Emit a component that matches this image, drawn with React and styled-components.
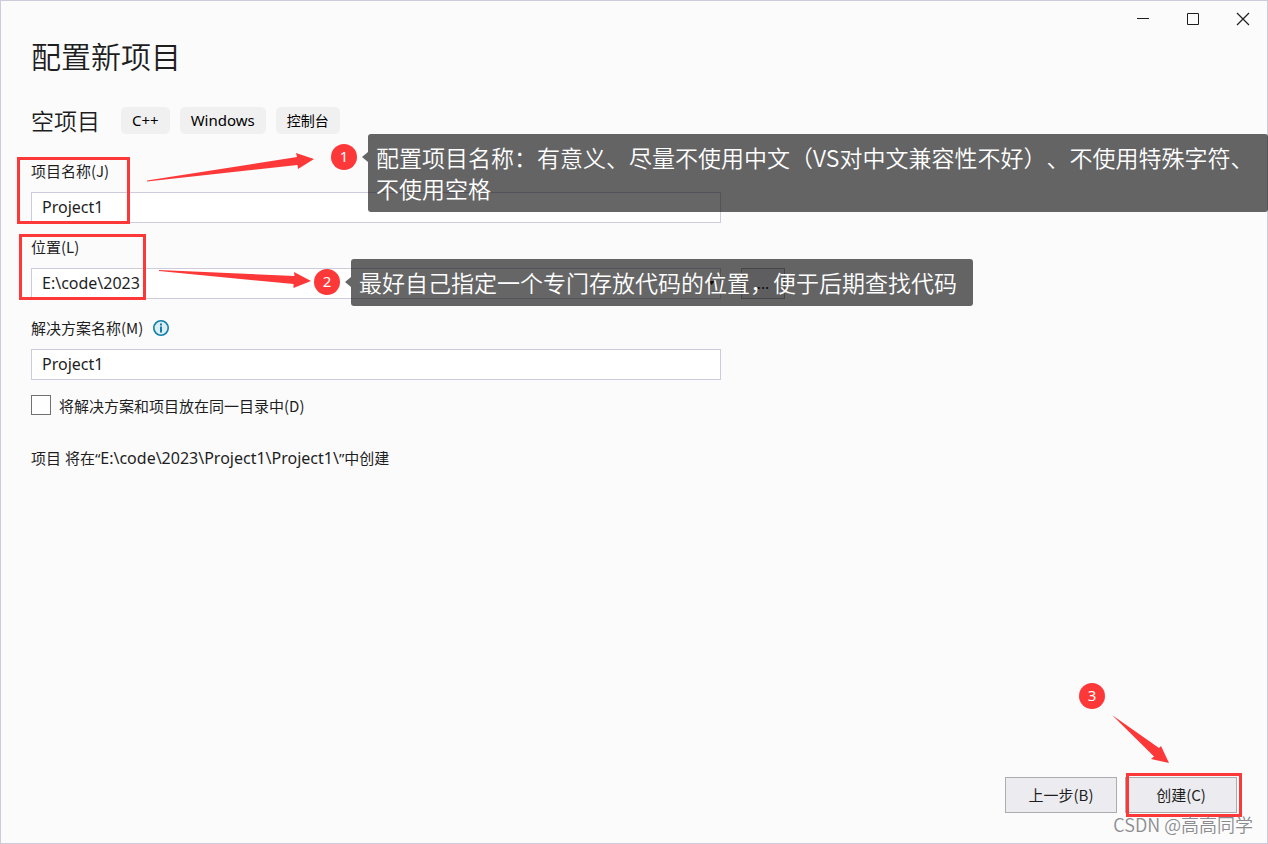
import React, { useCallback, useState } from 'react';
import styled, { createGlobalStyle } from 'styled-components';


const GlobalStyle = createGlobalStyle`
    * { box-sizing: border-box; }

    html, body, #root {
        height: 100%;
        margin: 0;
    }

    body, button, input, select {
        font-family: 'Noto Sans', 'Noto Sans CJK SC', sans-serif;
        font-size: 15px;
        color: #1e1e1e;
    }
`;

const Window = styled.div`
    position: relative;
    display: flex;
    flex-direction: column;
    min-height: 100%;
    overflow: hidden;
    background-color: #fbfbfc;
    outline: 1px solid #ccccdc;
    outline-offset: -1px;
`;

const TitleBar = styled.div`
    display: flex;
    justify-content: flex-end;
    height: 38px;
`;

const WindowButton = styled.button`
    display: flex;
    align-items: center;
    justify-content: center;
    width: 50px;
    padding: 0;
    border: 0;
    background: none;
`;

const Content = styled.main`
    flex: 1;
    padding: 0 31px;
`;

const Title = styled.h1`
    margin: 0;
    font-family: 'Noto Sans CJK SC', sans-serif;
    font-size: 30px;
    font-weight: 350;
    line-height: 34px;
`;

const Template = styled.div`
    display: flex;
    align-items: center;
    gap: 10px;
    margin: 35px 0 26px;

    h2 {
        margin: 0 11px 0 0;
        font-family: 'Noto Sans CJK SC', sans-serif;
        font-size: 23px;
        font-weight: 350;
        line-height: 27px;
    }
`;

const Tag = styled.span`
    padding: 0 11px;
    border-radius: 5px;
    background-color: #f0f0f0;
    font-size: ${({ $size }) => $size || 15}px;
    line-height: 27px;
    color: #000000;
`;

const Field = styled.div`
    position: relative;
    margin-bottom: ${({ $gap }) => $gap}px;
`;

const Label = styled.label`
    display: flex;
    align-items: center;
    gap: 10px;
    margin-bottom: 10px;
    font-family: 'Noto Sans CJK SC', sans-serif;
    line-height: 22px;
`;

const Line = styled.div`
    display: flex;
    gap: 20px;
`;

const TextInput = styled.input`
    width: 100%;
    max-width: 690px;
    height: 31px;
    padding: 0 10px 2px;
    border: 1px solid #ccccdc;
    background-color: #ffffff;
    font-size: 16px;
`;

const ComboWrap = styled.div`
    position: relative;
    flex: 0 1 690px;

    svg {
        position: absolute;
        top: 13px; right: 6px;
        pointer-events: none;
    }
`;

const Combo = styled.select`
    appearance: none;
    width: 100%;
    height: 31px;
    padding: 0 10px 2px;
    border: 1px solid #ccccdc;
    border-radius: 0;
    background-color: #ffffff;
    font-size: 16px;
`;

const Button = styled.button`
    width: ${({ $width }) => $width}px;
    height: ${({ $height }) => $height}px;
    padding: 0 0 2px;
    border: 1px solid #acacb0;
    background-color: #ececf0;
    font-family: 'Noto Sans CJK SC', sans-serif;
`;

const CheckRow = styled.label`
    display: flex;
    gap: 8px;
    font-family: 'Noto Sans CJK SC', sans-serif;
    line-height: 22px;

    input {
        appearance: none;
        width: 20px; height: 20px;
        margin: 0;
        border: 1px solid #717171;
        background-color: #fefefe;
    }

    input:checked {
        background-color: #0078a8;
    }
`;

const Summary = styled.p`
    margin: 30px 0 0;
    line-height: 22px;

    span {
        font-size: 16px;
    }
`;

const Footer = styled.footer`
    display: flex;
    justify-content: flex-end;
    gap: 8px;
    padding: 0 31px 31px;
`;

const ButtonSpot = styled.div`
    position: relative;
`;

/* 标注层 */
const Frame = styled.div`
    position: absolute;
    top: ${({ $top }) => $top}px;
    left: ${({ $left }) => $left}px;
    width: ${({ $width }) => $width}px;
    height: ${({ $height }) => $height}px;
    border: 3px solid #fc3838;
    pointer-events: none;
`;

const ArrowSvg = styled.svg`
    position: absolute;
    top: ${({ $top }) => $top}px;
    left: ${({ $left }) => $left}px;
    fill: #fc3838;
    pointer-events: none;
`;

const Badge = styled.span`
    position: absolute;
    top: ${({ $top }) => $top}px;
    left: ${({ $left }) => $left}px;
    width: 26px; height: 26px;
    border-radius: 26px;
    background-color: #fc3838;
    font-family: 'Noto Sans', sans-serif;
    font-size: 15px;
    line-height: 24px;
    text-align: center;
    color: #ffffff;
`;

const Callout = styled.div`
    position: absolute;
    z-index: 1;
    top: ${({ $top }) => $top}px;
    left: ${({ $left }) => $left}px;
    width: ${({ $width }) => $width}px;
    padding: 8px;
    border-radius: 3px;
    background-color: rgba(0, 0, 0, 0.6);
    font-family: 'Noto Sans CJK SC', sans-serif;
    font-size: 23px;
    font-weight: 350;
    line-height: 31px;
    text-spacing-trim: space-all;
    color: #ffffff;

    &::before {
        content: '';
        position: absolute;
        top: 18px; left: -6px;
        border: 5px solid transparent;
        border-left-width: 0;
        border-right: 6px solid rgba(0, 0, 0, 0.6);
    }
`;

const Watermark = styled.div`
    position: absolute;
    right: 15px; bottom: 8px;
    font-family: 'Noto Sans CJK SC', sans-serif;
    font-size: 18px;
    font-weight: 350;
    line-height: 24px;
    color: #8c8c8f;
    pointer-events: none;
`;


const InfoIcon = () => (
    <svg width='16' height='16' viewBox='0 0 16 16'>
        <circle cx='8' cy='8' r='7.2' fill='#dcedf4' stroke='#0f7fa9' strokeWidth='1.6' />
        <path d='M7 3.5h2v2H7zM7 6.5h2v6H7z' fill='#0f7fa9' />
    </svg>
);


const App = () => {

    const [name, setName] = useState('Project1');
    const [solution, setSolution] = useState('Project1');
    const [sameDir, setSameDir] = useState(false);

    const onChangeName = useCallback((e) => {
        setName(e.target.value);
    }, []);

    const onChangeSolution = useCallback((e) => {
        setSolution(e.target.value);
    }, []);

    const onToggle = useCallback(() => {
        setSameDir((sameDir) => !sameDir);
    }, []);


    return (
        <Window>
            <GlobalStyle />

            <TitleBar>
                <WindowButton aria-label='最小化'>
                    <svg width='14' height='14' stroke='#1e1e1e'><path d='M1 6.5h12' /></svg>
                </WindowButton>
                <WindowButton aria-label='最大化'>
                    <svg width='14' height='14' fill='none' stroke='#1e1e1e'><path d='M1.5 1.5h11v11h-11z' /></svg>
                </WindowButton>
                <WindowButton aria-label='关闭'>
                    <svg width='14' height='14' stroke='#1e1e1e' strokeWidth='1.2'><path d='M1 1l12 12M13 1L1 13' /></svg>
                </WindowButton>
            </TitleBar>

            <Content>
                <Title>配置新项目</Title>

                <Template>
                    <h2>空项目</h2>
                    <Tag>C++</Tag>
                    <Tag>Windows</Tag>
                    <Tag $size={14}>控制台</Tag>
                </Template>

                <Field $gap={13}>
                    <Label htmlFor='name'>项目名称(J)</Label>
                    <Line>
                        <TextInput id='name' value={name} onChange={onChangeName} />
                    </Line>
                    <Frame $top={-3} $left={-14} $width={113} $height={67} />
                    <ArrowSvg $top={-8} $left={115} width='170' height='30'>
                        <path d='M1 28.5L151 5L150 1L168 7L152 17L151.5 13L1 29.5z' />
                    </ArrowSvg>
                    <Badge $top={-16} $left={300}>1</Badge>
                    <Callout $top={-26} $left={337} $width={900}>
                        配置项目名称：有意义、尽量不使用中文（VS对中文兼容性不好）、不使用特殊字符、不使用空格
                    </Callout>
                </Field>

                <Field $gap={18}>
                    <Label htmlFor='location'>位置(L)</Label>
                    <Line>
                        <ComboWrap>
                            <Combo id='location'>
                                <option>E:\code\2023</option>
                            </Combo>
                            <svg width='7' height='5'><path d='M0 0h7L3.5 4z' fill='#1e1e1e' /></svg>
                        </ComboWrap>
                        <Button $width={44} $height={31} aria-label='浏览'>...</Button>
                    </Line>
                    <Frame $top={-2} $left={-12} $width={127} $height={66} />
                    <ArrowSvg $top={32} $left={127} width='156' height='22'>
                        <path d='M1 2L136.5 8L136 4L153 13L135.5 20L135.5 16L1 3z' />
                    </ArrowSvg>
                    <Badge $top={33} $left={283}>2</Badge>
                    <Callout $top={23} $left={320} $width={622}>
                        最好自己指定一个专门存放代码的位置，便于后期查找代码
                    </Callout>
                </Field>

                <Field $gap={15}>
                    <Label htmlFor='solution'>
                        解决方案名称(M)
                        <InfoIcon />
                    </Label>
                    <Line>
                        <TextInput id='solution' value={solution} onChange={onChangeSolution} />
                    </Line>
                </Field>

                <CheckRow>
                    <input type='checkbox' checked={sameDir} onChange={onToggle} />
                    将解决方案和项目放在同一目录中(D)
                </CheckRow>

                <Summary>项目 将在“<span>E:\code\2023\Project1\Project1\</span>”中创建</Summary>
            </Content>

            <Footer>
                <Button $width={112} $height={36}>上一步(B)</Button>
                <ButtonSpot>
                    <Button $width={112} $height={36}>创建(C)</Button>
                    <Frame $top={-4} $left={1} $width={116} $height={44} />
                    <ArrowSvg $top={-63} $left={-14} width='60' height='52'>
                        <path d='M1 1L48 34L50 32L58 49L40 45L43 42.5z' />
                    </ArrowSvg>
                    <Badge $top={-94} $left={-46}>3</Badge>
                </ButtonSpot>
            </Footer>

            <Watermark>CSDN @高高同学</Watermark>
        </Window>
    )
}


export default App;
